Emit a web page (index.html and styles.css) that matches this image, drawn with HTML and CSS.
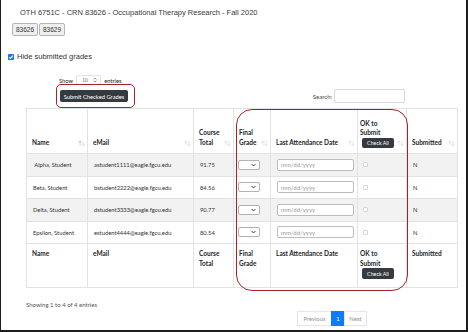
FILE: index.html
```html
<!DOCTYPE html>
<html>
<head>
<meta charset="utf-8">
<link rel="stylesheet" href="styles.css">
</head>
<body>
<div class="frame">
  <div class="title">OTH 6751C - CRN 83626 - Occupational Therapy Research - Fall 2020</div>
  <div class="sections">
    <button class="sec">83626</button><button class="sec">83629</button>
  </div>
  <div class="hide">
    <span class="cb-checked"><svg viewBox="0 0 10 10" width="6" height="6"><path d="M2 5.2 L4.2 7.4 L8.2 2.6" fill="none" stroke="#fff" stroke-width="1.8"/></svg></span>
    <span>Hide submitted grades</span>
  </div>

  <div class="dt">
    <div class="dt-top">
      <div class="dt-left">
        <div class="length">Show <span class="len-select">10 <svg viewBox="0 0 6 8" width="4" height="6"><path d="M1 3 L3 1 L5 3 M1 5 L3 7 L5 5" fill="none" stroke="#555" stroke-width="1"/></svg></span> entries</div>
        <button class="btn-dark submit">Submit Checked Grades</button>
      </div>
      <div class="search">Search: <span class="search-input"></span></div>
    </div>

    <table class="grades">
      <colgroup>
        <col style="width:61px"><col style="width:106px"><col style="width:40px"><col style="width:37px"><col style="width:87px"><col style="width:49px"><col style="width:51px">
      </colgroup>
      <thead>
        <tr>
          <th><div class="th"><span>Name</span><span class="sort"><b class="on">↑</b>↓</span></div></th>
          <th><div class="th"><span>eMail</span><span class="sort">↑↓</span></div></th>
          <th><div class="th"><span>Course<br>Total</span><span class="sort">↑↓</span></div></th>
          <th><div class="th"><span>Final<br>Grade</span><span class="sort">↑↓</span></div></th>
          <th><div class="th"><span>Last Attendance Date</span><span class="sort">↑↓</span></div></th>
          <th class="okcol"><div class="th"><span class="ok">OK to<br>Submit<br><button class="btn-dark check">Check All</button></span><span class="sort">↑↓</span></div></th>
          <th><div class="th"><span>Submitted</span><span class="sort">↑↓</span></div></th>
        </tr>
      </thead>
      <tbody>
        <tr class="odd">
          <td class="nm">&nbsp;Alpha, Student</td><td>astudent1111@eagle.fgcu.edu</td><td>91.75</td>
          <td class="c-sel"><span class="sel"><svg viewBox="0 0 8 6" width="5" height="4"><path d="M1 1.5 L4 4.5 L7 1.5" fill="none" stroke="#333" stroke-width="1.6"/></svg></span></td>
          <td><span class="date">mm/dd/yyyy</span></td><td class="c-cb"><span class="cb"></span></td><td>N</td>
        </tr>
        <tr>
          <td class="nm">Beta, Student</td><td>bstudent2222@eagle.fgcu.edu</td><td>84.56</td>
          <td class="c-sel"><span class="sel"><svg viewBox="0 0 8 6" width="5" height="4"><path d="M1 1.5 L4 4.5 L7 1.5" fill="none" stroke="#333" stroke-width="1.6"/></svg></span></td>
          <td><span class="date">mm/dd/yyyy</span></td><td class="c-cb"><span class="cb"></span></td><td>N</td>
        </tr>
        <tr class="odd">
          <td class="nm">Delta, Student</td><td>dstudent3333@eagle.fgcu.edu</td><td>90.77</td>
          <td class="c-sel"><span class="sel"><svg viewBox="0 0 8 6" width="5" height="4"><path d="M1 1.5 L4 4.5 L7 1.5" fill="none" stroke="#333" stroke-width="1.6"/></svg></span></td>
          <td><span class="date">mm/dd/yyyy</span></td><td class="c-cb"><span class="cb"></span></td><td>N</td>
        </tr>
        <tr>
          <td class="nm">Epsilon, Student</td><td>estudent4444@eagle.fgcu.edu</td><td>80.54</td>
          <td class="c-sel"><span class="sel"><svg viewBox="0 0 8 6" width="5" height="4"><path d="M1 1.5 L4 4.5 L7 1.5" fill="none" stroke="#333" stroke-width="1.6"/></svg></span></td>
          <td><span class="date">mm/dd/yyyy</span></td><td class="c-cb"><span class="cb"></span></td><td>N</td>
        </tr>
      </tbody>
      <tfoot>
        <tr>
          <th>Name</th><th>eMail</th><th>Course<br>Total</th><th>Final<br>Grade</th><th>Last Attendance Date</th>
          <th class="okcol"><span class="ok">OK to<br>Submit<br><button class="btn-dark check">Check All</button></span></th>
          <th>Submitted</th>
        </tr>
      </tfoot>
    </table>

    <div class="dt-bottom">
      <div class="info">Showing 1 to 4 of 4 entries</div>
      <div class="pager">
        <span class="pg">Previous</span><span class="pg active">1</span><span class="pg">Next</span>
      </div>
    </div>
  </div>

  <div class="ring ring-submit"></div>
  <div class="ring ring-cols"></div>
</div>
</body>
</html>
```

FILE: styles.css
```css
* { box-sizing: border-box; }
html, body { margin: 0; padding: 0; background: #fff; }
.frame {
  position: relative;
  width: 468px;
  height: 332px;
  border-left: 1px solid #1e1e1e;
  border-right: 2px solid #1e1e1e;
  border-bottom: 2px solid #1e1e1e;
  overflow: hidden;
  font-family: "Liberation Sans", Arial, sans-serif;
  color: #333;
}
.title {
  padding: 8px 0 0 19px;
  font-size: 7.5px;
  line-height: 10px;
  color: #3a3a3a;
}
.sections {
  display: flex;
  gap: 1px;
  margin: 5px 0 0 11px;
}
.sec {
  width: 26px;
  height: 13px;
  padding: 0;
  font-family: "Liberation Sans", Arial, sans-serif;
  font-size: 6.5px;
  color: #333;
  background: #efefef;
  border: 1px solid #b5b5b5;
  border-radius: 2px;
}
.hide {
  display: flex;
  align-items: center;
  gap: 3px;
  margin: 16px 0 0 7px;
  font-size: 7.5px;
  line-height: 10px;
  color: #333;
}
.cb-checked {
  display: flex;
  align-items: center;
  justify-content: center;
  width: 6px;
  height: 6px;
  background: #1a73e8;
  border-radius: 1px;
}
.dt {
  width: 431px;
  margin-left: 25px;
  font-family: Lato, "Open Sans", sans-serif;
  color: #212529;
}
.dt-top {
  display: flex;
  justify-content: space-between;
  align-items: flex-end;
  margin-top: 13px;
  padding: 0 52px 0 33px;
}
.length {
  display: flex;
  align-items: center;
  gap: 3px;
  font-size: 5.8px;
  height: 10px;
}
.len-select {
  display: inline-flex;
  align-items: center;
  justify-content: space-between;
  width: 25px;
  height: 10px;
  padding: 0 3px 0 5px;
  font-size: 5px;
  color: #777;
  border: 1px solid #e3e3e3;
  border-radius: 2px;
}
.btn-dark {
  background: #343a40;
  color: #fff;
  border: none;
  border-radius: 2px;
  font-family: Lato, "Open Sans", sans-serif;
  padding: 0;
}
.submit {
  display: block;
  margin: 5px 0 0 1px;
  width: 68px;
  height: 12px;
  font-size: 5.8px;
}
.search {
  display: flex;
  align-items: center;
  gap: 2px;
  font-size: 6px;
  color: #444;
  margin-bottom: -1px;
}
.search-input {
  display: block;
  width: 71px;
  height: 14px;
  border: 1px solid #d9d9d9;
  border-radius: 2px;
}
.grades {
  margin-top: 6px;
  border-collapse: collapse;
  table-layout: fixed;
  width: 431px;
  font-size: 6px;
}
.grades th, .grades td {
  border: 1px solid #e3e3e3;
}
.grades thead th {
  height: 45px;
  vertical-align: bottom;
  padding: 0 3px 5px 5px;
  text-align: left;
  font-size: 6.5px;
  font-weight: 700;
  line-height: 10px;
}
.th {
  display: flex;
  justify-content: space-between;
  align-items: flex-end;
}
.sort {
  font-size: 5.5px;
  font-weight: 400;
  color: #d0d0d0;
  letter-spacing: -1px;
  line-height: 10px;
}
.sort .on { font-weight: 400; color: #a8a8a8; }
.grades .okcol { padding-left: 2px; }
.ok { display: block; line-height: 8.5px; }
.check {
  display: block;
  width: 32px;
  height: 10px;
  margin: 1px 0 0 2px;
  font-size: 5.3px;
}
.grades tbody td {
  height: 22.5px;
  padding: 0 4px 0 6px;
  vertical-align: middle;
  font-size: 5.8px;
  color: #333;
}
.grades tbody td.nm { padding-left: 6px; }
.grades tbody tr.odd td { background: #f2f2f2; }
.sel {
  display: flex;
  align-items: center;
  justify-content: flex-end;
  width: 22px;
  height: 10px;
  padding-right: 3px;
  background: #fff;
  border: 1px solid #b3b3b3;
  border-radius: 2px;
}
.grades tbody td.c-sel { padding-left: 4px; }
.date {
  display: flex;
  align-items: center;
  width: 77px;
  height: 12px;
  padding-left: 3px;
  font-size: 6px;
  color: #9a9a9a;
  background: #fff;
  border: 1px solid #bdbdbd;
  border-radius: 2px;
}
.grades tbody td.c-cb { padding-left: 5px; }
.cb {
  display: block;
  width: 5px;
  height: 5px;
  border: 1px solid #d6d6d6;
  border-radius: 1px;
  background: #fff;
}
.grades tfoot th {
  height: 44px;
  vertical-align: top;
  padding: 5px 3px 0 5px;
  text-align: left;
  font-size: 6.5px;
  font-weight: 700;
  line-height: 10px;
}
.grades tfoot th .ok { line-height: 9.5px; }
.grades tfoot .check { height: 11px; margin-top: 0; }
.dt-bottom {
  display: flex;
  justify-content: space-between;
  align-items: flex-start;
  padding-right: 90px;
}
.info {
  margin-top: 13px;
  font-size: 6px;
  line-height: 8px;
  color: #555;
}
.pager {
  display: flex;
  margin-top: 23px;
}
.pg {
  display: flex;
  align-items: center;
  justify-content: center;
  height: 15px;
  padding: 0 5px;
  font-size: 5.8px;
  color: #8a8f94;
  border: 1px solid #e6e6e6;
  margin-left: -1px;
}
.pg:first-child { width: 35px; }
.pg.active {
  width: 14px;
  background: #0d7bfa;
  border-color: #0d7bfa;
  color: #fff;
}
.pg:last-child { width: 23px; }
.ring {
  position: absolute;
  border: 1.5px solid #a3222b;
}
.ring-submit {
  left: 55px;
  top: 84px;
  width: 79px;
  height: 24px;
  border-radius: 5px;
}
.ring-cols {
  left: 235px;
  top: 109px;
  width: 172px;
  height: 182px;
  border-radius: 16px;
}
```
